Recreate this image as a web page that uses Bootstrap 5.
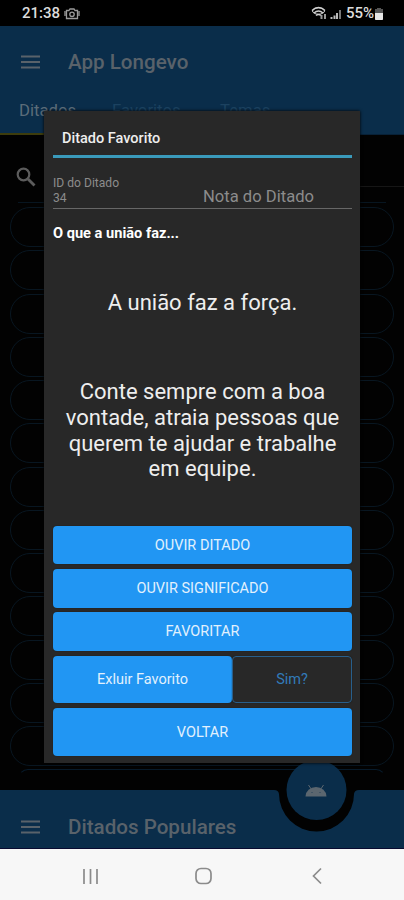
<!DOCTYPE html>
<html lang="pt-BR">
<head>
<meta charset="utf-8">
<meta name="viewport" content="width=device-width, initial-scale=1">
<title>App Longevo</title>
<link href="https://cdn.jsdelivr.net/npm/bootstrap@5.3.0/dist/css/bootstrap.min.css" rel="stylesheet">
<style>
body{font-family:Roboto,"Liberation Sans",sans-serif;background:#020202;color:#eee;line-height:1.17}
.phone{width:404px;height:900px}
.statusbar{height:26px;background:#000;padding:1px 20px 0 22px;font-size:15px;font-weight:500;color:#dcdcdc}
.statusbar svg,.appbar svg,.sysnav svg,.finder svg{display:block;flex:none}
.app-head{height:109px;background:#0a2d4a;border-bottom:1px solid #082137}
.appbar{height:72px;padding-left:20px;color:#59626a}
.appbar-title{font-size:20.6px;font-weight:500;margin-left:27px}
.tabline{height:37px;font-size:16.7px;padding:3px 0 0 19px;color:#1c4260}
.tabline span{width:93px}
.tabline span+span{width:108px}
.tabline .on{color:#5b6c79}
.tabmark{width:89px;height:2px;background:#3d3c0c;margin-top:-2px}
.finder{height:66px;padding:32px 0 0 16px}
.finder-line{height:1px;background:#161616;margin:-1px 0 0 28px}
.items{height:589px;padding:1px 10px 0;overflow:hidden}
.items-top{height:1px;background:#071520;margin:0 8px 4px}
.pill{height:40px;margin-bottom:3.25px;border:1px solid #081621;border-radius:20px}
.pill-cut{height:20px;margin:1px 8px 0;border:1px solid #081621;border-color:#071a2a transparent transparent;border-radius:10px}
.dock{height:59px;background:#0a2d4a;border-bottom:1px solid #080a30}
.dock .appbar{height:58px;padding-top:16px}
.sysnav{height:51px;background:#f7f7f7}
.notch{left:270px;top:750px}
.dialog-box{left:44px;top:111px;width:316px;height:652px;background:#282828;padding:0 8px 0 9px;box-shadow:0 0 3px #000}
.dialog-title{height:47px;font-size:14.5px;font-weight:500;padding:20px 0 0 9px;border-bottom:3px solid #3a9abb}
.fields{height:51px;border-bottom:1px solid #676767;color:#8c8c8c}
.field-a{width:150px;font-size:12.1px;line-height:14.5px;padding-top:18px}
.field-b{font-size:16.6px;padding-top:29px}
.teaser{font-size:14.6px;font-weight:700;color:#fff;padding-top:16px;height:58px}
.saying{font-size:22px;line-height:26px;height:99px;padding-top:23px}
.meaning{font-size:22px;line-height:25.8px;height:160px;padding-top:13px;margin:0 -4px}
.app-btn{--bs-btn-color:#e2f1fd;--bs-btn-bg:#2196f3;--bs-btn-border-width:0;--bs-btn-padding-y:0;--bs-btn-border-radius:4px;--bs-btn-font-size:14.5px;--bs-btn-line-height:1.2;height:38.4px;padding-top:1px;box-shadow:0 0 1px #1a1206}
.app-btn.tall{height:47.6px}
.app-btn.hollow{--bs-btn-bg:#282828;--bs-btn-color:#327bb9;--bs-btn-border-width:1px;--bs-btn-border-color:#285f8c;width:120px}
.actions{gap:4.8px}
</style>
<script src="https://cdn.jsdelivr.net/npm/bootstrap@5.3.0/dist/js/bootstrap.bundle.min.js"></script>
</head>
<body>
<div class="phone position-relative overflow-hidden d-flex flex-column">
  <div class="statusbar d-flex align-items-center">
    <span>21:38</span>
    <svg class="ms-1" width="16" height="12" viewBox="0 0 16 12" fill="none" stroke="#9c9c9c" stroke-width="1.3"><path d="M5 2.5 6 1h4l1 1.500h2.500v8h-11v-8z"/><circle cx="8" cy="6.300" r="2.200"/><path d="M1 3v5M15 3v5"/></svg>
    <svg class="ms-auto" width="31" height="15" viewBox="0 0 31 15" fill="none" stroke="#cfcfcf" stroke-width="1.500"><path d="M1 4.500Q7.500-1.500 14 4.500M3 7q4.500-4 9 0M5 9.500q2.500-2 5 0"/><ellipse cx="7.500" cy="5" rx="6" ry="3.200" stroke-width="1"/><path d="M10.500 13V9M14 8v5" stroke-width="2" stroke="#999"/><path d="M20.500 13v-2M23.500 13V9.500M26 13V7" stroke="#bbb" stroke-width="2"/><path d="M29 13V4" stroke="#777" stroke-width="2"/></svg>
    <span class="ms-1">55%</span>
    <svg width="10" height="14" viewBox="0 0 10 14"><path d="M3 1h4v1h2v11H1V2h2z" fill="#555"/><path d="M1 6h8v6q0 1-1 1H2q-1 0-1-1z" fill="#e6e6e6"/></svg>
  </div>

  <header class="app-head">
    <div class="appbar d-flex align-items-center">
      <svg width="21" height="14" viewBox="0 0 21 14" stroke="currentColor" stroke-width="2"><path d="M1 1.500h19M1 7h19M1 12.500h19"/></svg>
      <span class="appbar-title">App Longevo</span>
    </div>
    <nav class="tabline d-flex"><span class="on">Ditados</span><span>Favoritos</span><span>Temas</span></nav>
    <div class="tabmark"></div>
  </header>

  <main class="flex-grow-1">
    <div class="finder">
      <svg width="20" height="20" viewBox="0 0 20 20" fill="none" stroke="#5c5c5c" stroke-width="2.200"><circle cx="7.500" cy="7.500" r="5.800"/><path d="m12 12 6.500 6.500" stroke-width="2.800"/></svg>
      <div class="finder-line"></div>
    </div>
    <div class="items">
      <div class="items-top"></div>
      <div class="pill"></div><div class="pill"></div><div class="pill"></div><div class="pill"></div><div class="pill"></div><div class="pill"></div><div class="pill"></div><div class="pill"></div><div class="pill"></div><div class="pill"></div><div class="pill"></div><div class="pill"></div><div class="pill"></div>
      <div class="pill-cut"></div>
    </div>
  </main>

  <footer class="dock">
    <div class="appbar d-flex align-items-center">
      <svg width="21" height="14" viewBox="0 0 21 14" stroke="currentColor" stroke-width="2"><path d="M1 1.500h19M1 7h19M1 12.500h19"/></svg>
      <span class="appbar-title">Ditados Populares</span>
    </div>
  </footer>
  <div class="sysnav">
    <svg width="404" height="51" viewBox="0 0 404 51" fill="none" stroke="#8b8b8b" stroke-width="1.700"><path d="M84 20v15M90.500 20v15M97 20v15M321 19.500l-7.500 7.500 7.500 7.500"/><rect x="196" y="19.500" width="15" height="15" rx="5"/></svg>
  </div>

  <svg class="notch position-absolute" width="92" height="84" viewBox="0 0 92 84"><path d="M4 40q4.500 0 5 4a37.500 37.500 0 0 0 75 0q.5-4 5-4V36H4z" fill="#020202"/><circle cx="46.500" cy="40" r="30" fill="#0a2d4a"/><path d="M35.500 46.500a10.500 9.500 0 0 1 21 0z" fill="#5b666f"/><path d="m38.500 35 3 4.500M53.500 35l-3 4.500" stroke="#5b666f"/><path d="M41.500 42.500h1M49.500 42.500h1" stroke="#28435a"/></svg>

  <section class="dialog-box position-absolute" role="dialog" aria-label="Ditado Favorito">
    <div class="dialog-title">Ditado Favorito</div>
    <div class="fields d-flex">
      <div class="field-a">ID do Ditado<br>34</div>
      <div class="field-b">Nota do Ditado</div>
    </div>
    <div class="teaser">O que a união faz...</div>
    <div class="saying text-center">A união faz a força.</div>
    <div class="meaning text-center">Conte sempre com a boa<br>vontade, atraia pessoas que<br>querem te ajudar e trabalhe<br>em equipe.</div>
    <div class="actions d-flex flex-column">
      <button class="btn app-btn">OUVIR DITADO</button>
      <button class="btn app-btn">OUVIR SIGNIFICADO</button>
      <button class="btn app-btn">FAVORITAR</button>
      <div class="d-flex">
        <button class="btn app-btn tall flex-grow-1">Exluir Favorito</button>
        <button class="btn app-btn tall hollow">Sim?</button>
      </div>
      <button class="btn app-btn tall">VOLTAR</button>
    </div>
  </section>
</div>
</body>
</html>
